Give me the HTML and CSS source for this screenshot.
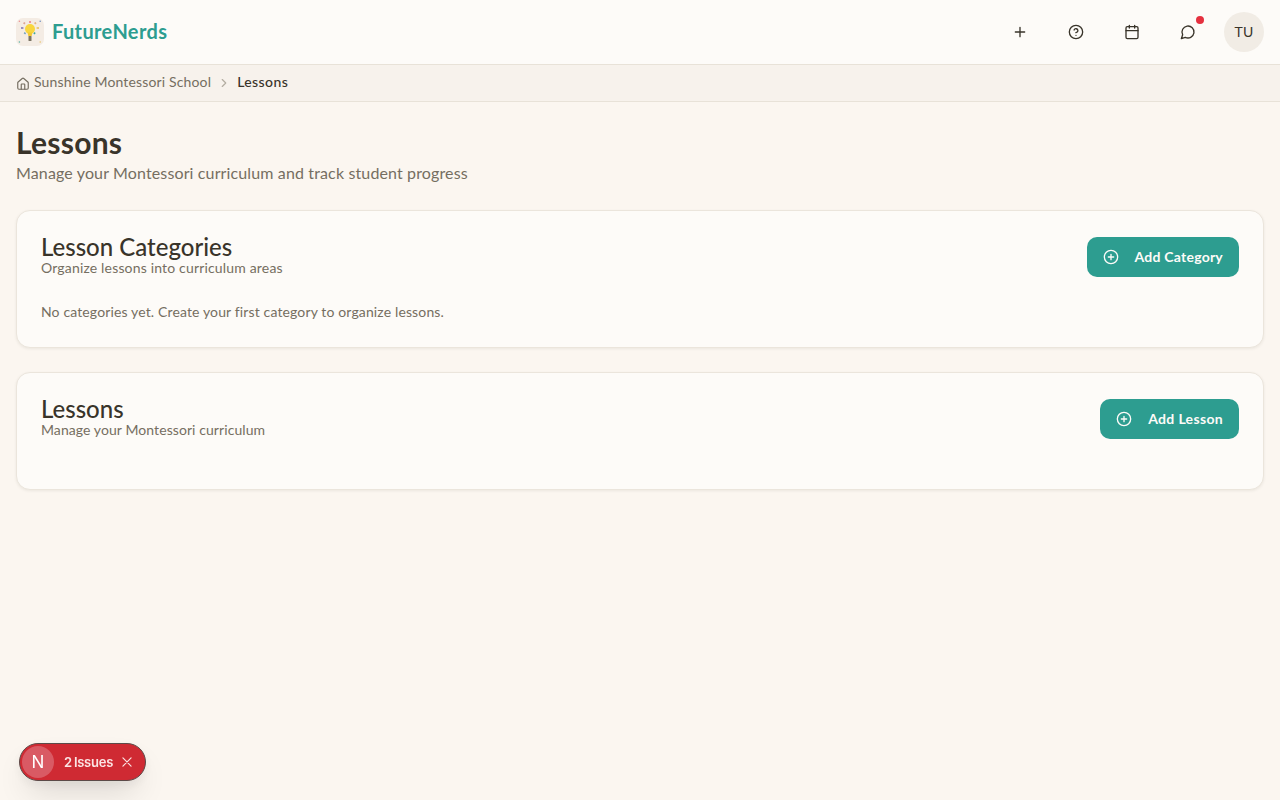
FILE: index.html
```html
<!DOCTYPE html>
<html lang="en">
<head>
<meta charset="utf-8">
<title>Lessons - FutureNerds</title>
<link rel="stylesheet" href="styles.css">
</head>
<body>
<header class="topbar">
  <a class="brand" href="#">
    <span class="logo">
      <svg width="28" height="28" viewBox="0 0 28 28">
        <g stroke-width="1.8" stroke-linecap="butt">
          <path d="M14 3v2" stroke="#ec8f8f"/>
          <path d="M7.6 4.6l1.4 1.2" stroke="#dea38f"/>
          <path d="M20 4.6l-1.4 1.2" stroke="#e6b27a"/>
          <path d="M5 10h2.4" stroke="#8f86b8"/>
          <path d="M20.6 10h2.4" stroke="#eac66e"/>
          <path d="M8.4 15.8l1-1.2" stroke="#6f9fc0"/>
          <path d="M19 15.8l-1-1.2" stroke="#3fa79b"/>
        </g>
        <circle cx="14" cy="11" r="5" fill="#f8d63f"/>
        <path d="M11.6 14.6h4.8l-.7 3.4h-3.4z" fill="#f3c935"/>
        <rect x="12.5" y="18" width="3" height="5" rx=".6" fill="#7a7362"/>
        <circle cx="3.4" cy="3.2" r=".8" fill="#ec8f8f"/>
        <circle cx="24.2" cy="3.2" r=".8" fill="#6f8fc0"/>
        <circle cx="3.4" cy="24" r=".8" fill="#5db5a8"/>
        <circle cx="24.2" cy="24" r=".8" fill="#eac66e"/>
      </svg>
    </span>
    <span class="brand-name">FutureNerds</span>
  </a>
  <nav class="actions">
    <button class="icon-btn" aria-label="Add">
      <svg class="ico" viewBox="0 0 24 24"><path d="M5 12h14M12 5v14"/></svg>
    </button>
    <button class="icon-btn" aria-label="Help">
      <svg class="ico" viewBox="0 0 24 24"><circle cx="12" cy="12" r="10"/><path d="M9.1 9a3 3 0 0 1 5.8 1c0 2-3 3-3 3M12 17h.01"/></svg>
    </button>
    <button class="icon-btn" aria-label="Calendar">
      <svg class="ico" viewBox="0 0 24 24"><rect x="3" y="4" width="18" height="18" rx="2"/><path d="M8 2v4M16 2v4M3 10h18"/></svg>
    </button>
    <button class="icon-btn" aria-label="Messages">
      <svg class="ico" viewBox="0 0 24 24"><path d="M7.9 20A9 9 0 1 0 4 16.1L2 22Z"/></svg>
      <span class="dot"></span>
    </button>
    <div class="avatar"><span class="avatar-text">TU</span></div>
  </nav>
</header>

<div class="crumbs">
  <svg class="crumb-home" viewBox="0 0 24 24"><path d="M15 21v-8a1 1 0 0 0-1-1h-4a1 1 0 0 0-1 1v8"/><path d="M3 10a2 2 0 0 1 .7-1.5l7-6a2 2 0 0 1 2.6 0l7 6A2 2 0 0 1 21 10v9a2 2 0 0 1-2 2H5a2 2 0 0 1-2-2z"/></svg>
  <span class="crumb-link">Sunshine Montessori School</span>
  <svg class="crumb-sep" viewBox="0 0 24 24"><path d="m9 18 6-6-6-6"/></svg>
  <span class="crumb-current">Lessons</span>
</div>

<main class="page">
  <h1 class="page-title">Lessons</h1>
  <p class="page-sub">Manage your Montessori curriculum and track student progress</p>

  <section class="card card-categories">
    <div class="card-head">
      <div>
        <h2 class="card-title">Lesson Categories</h2>
        <p class="card-sub">Organize lessons into curriculum areas</p>
      </div>
      <button class="btn">
        <svg class="btn-ico" viewBox="0 0 24 24"><circle cx="12" cy="12" r="10"/><path d="M8 12h8M12 8v8"/></svg>
        <span class="btn-label">Add Category</span>
      </button>
    </div>
    <p class="empty">No categories yet. Create your first category to organize lessons.</p>
  </section>

  <section class="card card-lessons">
    <div class="card-head">
      <div>
        <h2 class="card-title">Lessons</h2>
        <p class="card-sub card-sub-tight">Manage your Montessori curriculum</p>
      </div>
      <button class="btn">
        <svg class="btn-ico" viewBox="0 0 24 24"><circle cx="12" cy="12" r="10"/><path d="M8 12h8M12 8v8"/></svg>
        <span class="btn-label btn-label-wide">Add Lesson</span>
      </button>
    </div>
  </section>
</main>

<div class="issues">
  <span class="n-badge">N</span>
  <span class="issues-text">2 Issues</span>
  <svg class="issues-x" viewBox="0 0 24 24"><path d="M5 5l14 14M19 5L5 19"/></svg>
</div>
</body>
</html>
```
FILE: styles.css
```css
* { box-sizing: border-box; }
html, body { margin: 0; padding: 0; }
body {
  min-height: 800px;
  background: #fbf6f0;
  color: #39342a;
  font-family: "Lato", "Open Sans", sans-serif;
}
h1, h2, p { margin: 0; }
button { font-family: inherit; border: 0; background: none; padding: 0; cursor: pointer; }

.topbar {
  height: 65px;
  display: flex;
  align-items: center;
  justify-content: space-between;
  padding: 0 16px;
  background: #fdfbf8;
  border-bottom: 1px solid #e8e2d8;
}
.brand { display: flex; align-items: center; gap: 8px; text-decoration: none; }
.logo {
  width: 28px; height: 28px;
  border-radius: 7px;
  background: #f4ece4;
  display: block;
}
.logo svg { display: block; }
.brand-name { font-size: 20px; font-weight: 700; color: #2d9d90; letter-spacing: .36px; padding-bottom: 2px; }
.actions { display: flex; align-items: center; gap: 16px; }
.icon-btn {
  position: relative;
  width: 40px; height: 40px;
  display: flex; align-items: center; justify-content: center;
}
.ico {
  width: 16px; height: 16px;
  fill: none; stroke: #39342a; stroke-width: 2;
  stroke-linecap: round; stroke-linejoin: round;
}
.dot {
  position: absolute;
  top: 4px; right: 4px;
  width: 8px; height: 8px;
  border-radius: 50%;
  background: #e5303f;
}
.avatar {
  width: 40px; height: 40px;
  border-radius: 50%;
  background: #f1ece5;
  display: flex; align-items: center; justify-content: center;
  font-size: 14px; font-weight: 400;
  color: #39342a;
}
.avatar-text { padding-bottom: 2px; letter-spacing: .2px; }

.crumbs {
  height: 37px;
  display: flex;
  align-items: center;
  padding: 0 16px;
  background: #f7f2ec;
  border-bottom: 1px solid #e8e2d8;
  font-size: 14px;
}
.crumb-home {
  width: 14px; height: 14px; margin-right: 4px; margin-top: 1px;
  fill: none; stroke: #756e61; stroke-width: 2;
  stroke-linecap: round; stroke-linejoin: round;
}
.crumb-link { color: #756e61; letter-spacing: .15px; padding-bottom: 3px; }
.crumb-sep {
  width: 14px; height: 14px; margin: 0 6px;
  fill: none; stroke: #b3ada1; stroke-width: 2;
  stroke-linecap: round; stroke-linejoin: round;
}
.crumb-current { color: #39342a; font-weight: 500; letter-spacing: .4px; padding-bottom: 3px; }

.page { padding: 22px 16px 24px; }
.page-title { font-size: 30px; line-height: 36px; font-weight: 700; color: #39342a; letter-spacing: .25px; margin-bottom: 1px; }
.page-sub { font-size: 16px; line-height: 24px; color: #756e61; margin-bottom: 25px; letter-spacing: .135px; }

.card {
  background: #fdfbf8;
  border: 1px solid #ebe5dc;
  border-radius: 14px;
  box-shadow: 0 1px 3px rgba(57, 52, 42, .08);
  padding: 24px;
  margin-bottom: 24px;
}
.card-categories { height: 138px; }
.card-lessons { height: 118px; }
.card-head { display: flex; align-items: flex-start; justify-content: space-between; }
.card-title { font-size: 24px; line-height: 24px; font-weight: 500; color: #39342a; }
.card-sub { font-size: 14px; line-height: 20px; color: #756e61; margin-top: -1px; letter-spacing: .17px; }
.card-sub-tight { letter-spacing: .08px; }
.btn {
  height: 40px;
  margin-top: 2px;
  padding: 0 16px;
  display: flex; align-items: center;
  gap: 16px;
  border-radius: 10px;
  background: #2d9d90;
  color: #fdfbf8;
  font-size: 14px;
  font-weight: 700;
}
.btn-label { letter-spacing: .23px; padding-bottom: 2px; }
.btn-label-wide { letter-spacing: .33px; }
.btn-ico {
  width: 16px; height: 16px;
  fill: none; stroke: #fdfbf8; stroke-width: 2;
  stroke-linecap: round; stroke-linejoin: round;
}
.empty { font-size: 14px; line-height: 20px; color: #756e61; margin-top: 24px; letter-spacing: .135px; }

.issues {
  position: fixed;
  left: 19px; top: 743px;
  width: 127px; height: 38px;
  border-radius: 19px;
  background: #cf2a33;
  border: 1px solid #5c4a48;
  box-shadow: 0 16px 32px -8px rgba(0, 0, 0, .16), 0 4px 12px rgba(0, 0, 0, .06);
  display: flex; align-items: center;
  padding-left: 2px;
  color: #fbe4e4;
  font-family: "Inter", sans-serif;
}
.n-badge {
  width: 32px; height: 32px;
  border-radius: 50%;
  background: #d95a64;
  color: #fff;
  display: flex; align-items: center; justify-content: center;
  font-size: 17px; font-weight: 400;
}
.issues-text { margin-left: 10px; font-size: 13px; font-weight: 600; letter-spacing: -.25px; word-spacing: -1px; }
.issues-x {
  width: 14px; height: 14px; margin-left: 7px;
  fill: none; stroke: #fbe4e4; stroke-width: 2; stroke-linecap: round;
}
```
